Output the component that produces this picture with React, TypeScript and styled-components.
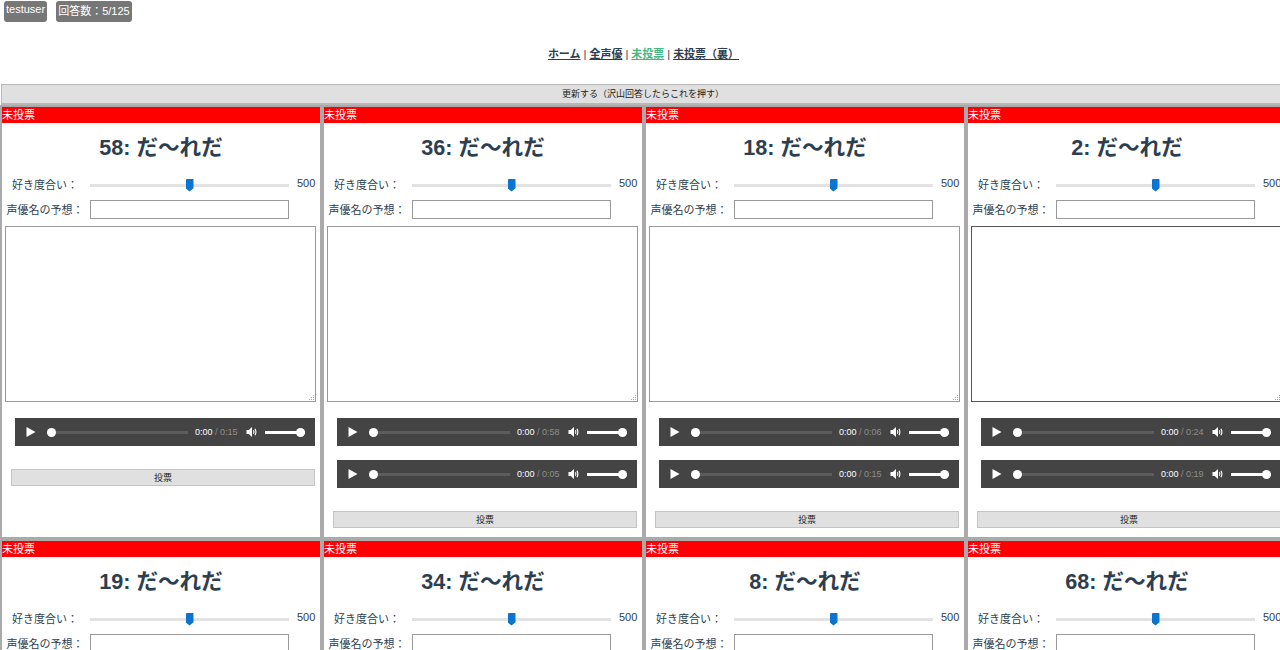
import React from 'react';
import styled, { createGlobalStyle } from 'styled-components';

const GlobalStyle = createGlobalStyle`
    html, body {
        margin: 0;
        padding: 0;
        height: 650px;
        overflow: hidden;
        background: #fff;
    }
    body, input, textarea, button {
        font-family: "Liberation Sans", "Noto Sans CJK JP", sans-serif;
    }
`;

const Page = styled.div`
    width: 1300px;
    height: 650px;
    overflow: hidden;
    color: #2c3e50;
    font-size: 11px;
`;

const UserBar = styled.div`
    display: flex;
    gap: 9px;
    padding: 1px 0 0 4px;
    height: 22px;
`;

const Badge = styled.span<{ $line: number }>`
    background: #777;
    color: #fff;
    border-radius: 3px;
    font-size: 11px;
    line-height: ${p => p.$line}px;
    height: 21px;
    padding: 0 2px;
`;

const Nav = styled.nav`
    width: 1287px;
    margin-top: 23px;
    text-align: center;
    font-size: 11px;
    line-height: 16px;
    font-weight: bold;
    color: #2c3e50;
`;

const NavLink = styled.a<{ $active?: boolean }>`
    color: ${p => (p.$active ? '#42b983' : '#2c3e50')};
    text-decoration: underline;
`;

const Divider = styled.span`
    font-weight: normal;
    margin: 0 3px;
`;

const RefreshButton = styled.button`
    display: block;
    width: 1284px;
    height: 21px;
    margin: 22px 0 0 1px;
    padding: 0 0 2px;
    background: #e0e0e0;
    border: 1px solid #b8b8b8;
    border-bottom-width: 2px;
    color: #222;
    font-size: 9px;
`;

const Grid = styled.div`
    display: grid;
    grid-template-columns: repeat(4, 322px);
`;

const Card = styled.section`
    box-sizing: border-box;
    height: 434px;
    border: 2px solid #aaa;
    background: #fff;
`;

const Status = styled.div`
    background: #f00;
    color: #fff;
    font-size: 11px;
    line-height: 16px;
    height: 16px;
`;

const Title = styled.h2`
    margin: 12px 0 16px;
    text-align: center;
    font-size: 21.6px;
    line-height: 26px;
    font-weight: bold;
`;

const FieldRow = styled.div`
    display: flex;
    align-items: center;
    padding-left: 4px;
    margin-bottom: 7px;
`;

const FieldLabel = styled.label`
    width: 78px;
    margin-right: 6px;
    flex: none;
    font-size: 11px;
    line-height: 16px;
    text-align: center;
`;

const SliderTrack = styled.div`
    width: 199px;
    height: 16px;
    display: flex;
    align-items: center;
    justify-content: center;
    background: linear-gradient(#e2e2e2, #e2e2e2) center / 100% 3px no-repeat;
`;

const SliderThumb = styled.div`
    width: 8px;
    height: 13px;
    background: #0a74d0;
    border-radius: 1px 1px 0 0;
    clip-path: polygon(0 0, 100% 0, 100% 75%, 50% 100%, 0 75%);
`;

const SliderValue = styled.span`
    margin: -4px 0 0 8px;
    font-size: 11px;
`;

const NameInput = styled.input`
    box-sizing: border-box;
    width: 199px;
    height: 19px;
    margin: 0;
    padding: 0 2px;
    background: #fff;
    border: 1px solid #999;
`;

const dot = 'linear-gradient(#aaa, #aaa)';

const Comment = styled.textarea<{ $focused?: boolean }>`
    display: block;
    box-sizing: border-box;
    width: 311px;
    height: 176px;
    margin: 0 0 0 3px;
    padding: 2px;
    background: #fff;
    border: 1px solid ${p => (p.$focused ? '#555' : '#999')};

    &::-webkit-resizer {
        background:
            ${dot} 13px 13px / 1px 1px no-repeat,
            ${dot} 11px 13px / 1px 1px no-repeat,
            ${dot} 9px 13px / 1px 1px no-repeat,
            ${dot} 13px 11px / 1px 1px no-repeat,
            ${dot} 11px 11px / 1px 1px no-repeat,
            ${dot} 13px 9px / 1px 1px no-repeat;
    }
`;

const AudioList = styled.div`
    display: flex;
    flex-direction: column;
    gap: 14px;
    margin: 16px 0 0 13px;
`;

const Player = styled.div`
    display: flex;
    align-items: center;
    width: 300px;
    height: 28px;
    background: #444;
`;

const PlayIcon = styled.svg`
    width: 10px;
    height: 10px;
    margin-left: 11px;
    flex: none;
`;

const SeekBar = styled.div`
    display: flex;
    align-items: center;
    width: 141px;
    height: 9px;
    margin-left: 10.5px;
    background: linear-gradient(#5c5c5c, #5c5c5c) center / 100% 3px no-repeat;
`;

const Knob = styled.div`
    width: 9px;
    height: 9px;
    flex: none;
    border-radius: 50%;
    background: #fff;
`;

const Time = styled.span`
    width: 42px;
    margin-left: 7.5px;
    flex: none;
    white-space: nowrap;
    font-size: 9px;
    color: #fff;
`;

const Duration = styled.span`
    color: #8e8e8e;
`;

const VolumeIcon = styled.svg`
    width: 12px;
    height: 12px;
    margin-left: 9px;
    flex: none;
`;

const VolumeBar = styled.div`
    display: flex;
    align-items: center;
    justify-content: flex-end;
    width: 40px;
    height: 9px;
    margin-left: 7px;
    background: linear-gradient(#fff, #fff) center / 100% 3px no-repeat;
    border-radius: 2px;
`;

const VoteButton = styled.button`
    display: block;
    box-sizing: border-box;
    width: 304px;
    height: 17px;
    margin: 23px 0 0 9px;
    padding: 0;
    background: #e0e0e0;
    border: 1px solid #c4c4c4;
    color: #222;
    font-size: 9px;
`;

interface ICard {
    id: number;
    durations: string[];
    focused?: boolean;
}

const cards: ICard[] = [
    { id: 58, durations: ['0:15'] },
    { id: 36, durations: ['0:58', '0:05'] },
    { id: 18, durations: ['0:06', '0:15'] },
    { id: 2, durations: ['0:24', '0:19'], focused: true },
    { id: 19, durations: ['0:20'] },
    { id: 34, durations: ['0:12'] },
    { id: 8, durations: ['0:09'] },
    { id: 68, durations: ['0:31'] },
];

const AudioPlayer = ({ duration }: { duration: string }) => (
    <Player>
        <PlayIcon viewBox="0 0 10 10">
            <path d="M0.5 0 L9.5 5 L0.5 10 Z" fill="#fff" />
        </PlayIcon>
        <SeekBar>
            <Knob />
        </SeekBar>
        <Time>
            0:00 <Duration>/ {duration}</Duration>
        </Time>
        <VolumeIcon viewBox="0 0 12 12">
            <path d="M0.5 4 H2.8 L6 1 V11 L2.8 8 H0.5 Z" fill="#fff" />
            <path d="M7.4 4.2 Q8.4 6 7.4 7.8 M9 2.8 Q10.8 6 9 9.2" stroke="#fff" strokeWidth="1.1" fill="none" />
        </VolumeIcon>
        <VolumeBar>
            <Knob />
        </VolumeBar>
    </Player>
);

const VoteCard = ({ card }: { card: ICard }) => (
    <Card>
        <Status>未投票</Status>
        <Title>{card.id}: だ〜れだ</Title>
        <FieldRow>
            <FieldLabel>好き度合い：</FieldLabel>
            <SliderTrack>
                <SliderThumb />
            </SliderTrack>
            <SliderValue>500</SliderValue>
        </FieldRow>
        <FieldRow>
            <FieldLabel>声優名の予想：</FieldLabel>
            <NameInput type="text" />
        </FieldRow>
        <Comment $focused={card.focused} />
        <AudioList>
            {card.durations.map((d, i) => (
                <AudioPlayer key={i} duration={d} />
            ))}
        </AudioList>
        <VoteButton>投票</VoteButton>
    </Card>
);

export default function App() {
    return (
        <Page>
            <GlobalStyle />
            <UserBar>
                <Badge $line={17}>testuser</Badge>
                <Badge $line={21}>回答数：5/125</Badge>
            </UserBar>
            <Nav>
                <NavLink>ホーム</NavLink>
                <Divider>|</Divider>
                <NavLink>全声優</NavLink>
                <Divider>|</Divider>
                <NavLink $active>未投票</NavLink>
                <Divider>|</Divider>
                <NavLink>未投票（裏）</NavLink>
            </Nav>
            <RefreshButton>更新する（沢山回答したらこれを押す）</RefreshButton>
            <Grid>
                {cards.map(card => (
                    <VoteCard key={card.id} card={card} />
                ))}
            </Grid>
        </Page>
    );
}
